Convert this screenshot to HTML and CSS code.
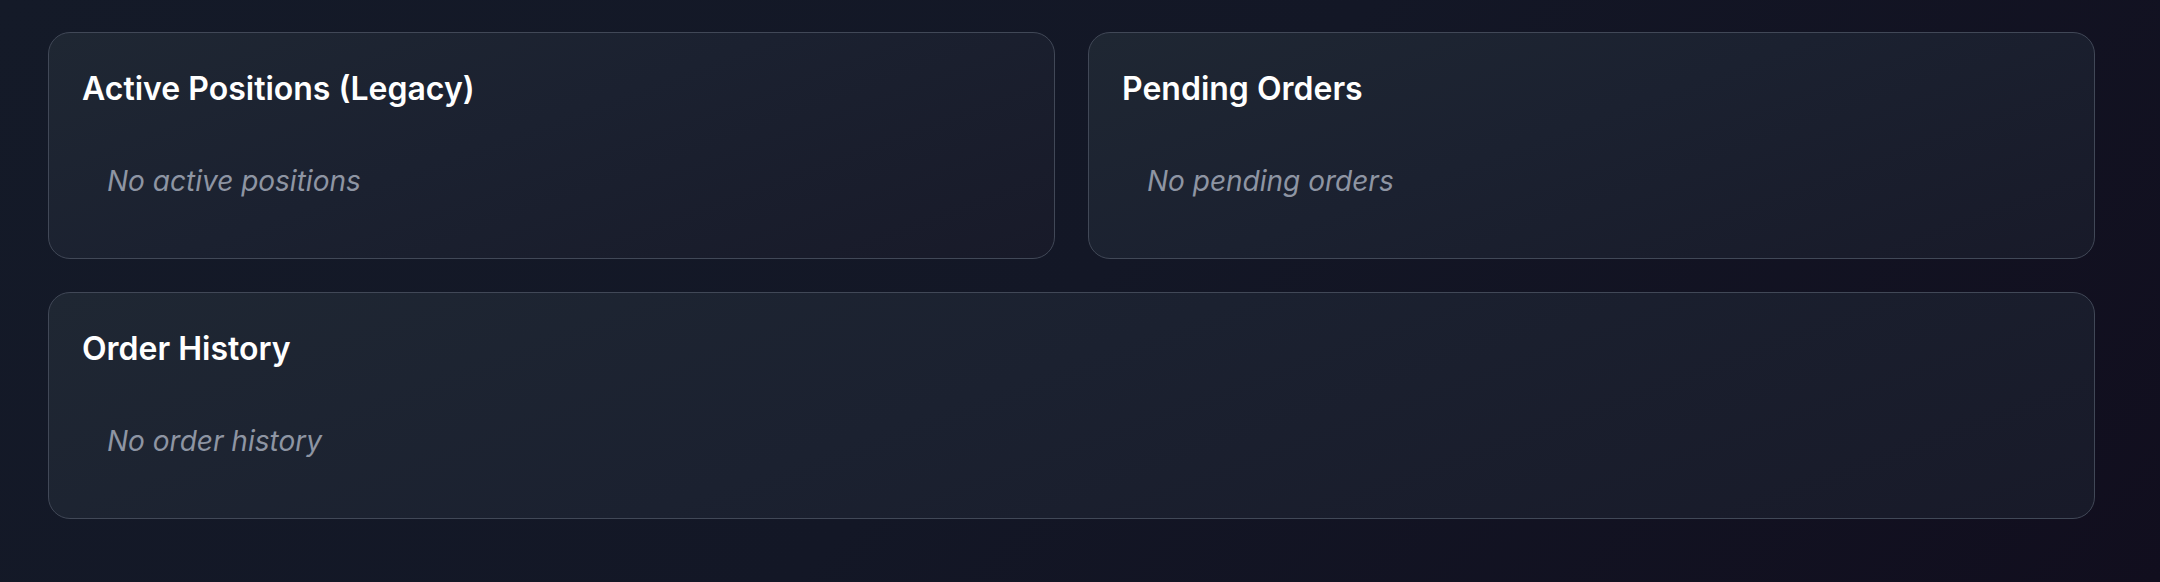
FILE: index.html
```html
<!DOCTYPE html>
<html lang="en">
<head>
<meta charset="utf-8">
<title>Orders</title>
<link rel="stylesheet" href="styles.css">
</head>
<body>
<main class="page">
  <div class="row">
    <section class="card">
      <h2 class="card-title">Active Positions (Legacy)</h2>
      <p class="empty">No active positions</p>
    </section>
    <section class="card">
      <h2 class="card-title">Pending Orders</h2>
      <p class="empty">No pending orders</p>
    </section>
  </div>
  <section class="card">
    <h2 class="card-title">Order History</h2>
    <p class="empty">No order history</p>
  </section>
</main>
</body>
</html>
```
FILE: styles.css
```css
html, body {
  margin: 0;
  padding: 0;
  height: 100%;
}
body {
  background: linear-gradient(135deg, #141a28 0%, #131726 50%, #110e1e 100%);
  font-family: Inter, "Noto Sans", sans-serif;
  color: #fff;
  overflow: hidden;
}
.page {
  padding: 32px 65px 0 48px;
  display: flex;
  flex-direction: column;
  gap: 33px;
}
.row {
  display: grid;
  grid-template-columns: 1fr 1fr;
  gap: 33px;
}
.card {
  border: 1.5px solid #414857;
  border-radius: 22px;
  background: linear-gradient(160deg, #1f2733 0%, #1b2130 45%, #181a29 100%);
  padding: 34px 33px 33px;
  height: 227px;
  box-sizing: border-box;
}
.card-title {
  margin: 0;
  font-size: 32px;
  line-height: 44px;
  font-weight: 600;
  color: #ffffff;
}
.empty {
  margin: 0;
  padding: 50px 25px 0;
  font-size: 28px;
  line-height: 40px;
  font-style: italic;
  color: #8e95a3;
}
```
